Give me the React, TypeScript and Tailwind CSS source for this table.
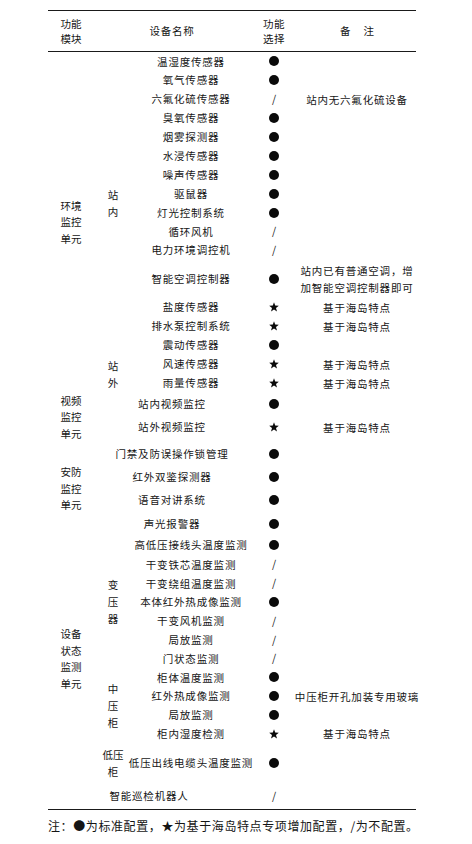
type Mark = 'dot' | 'star' | 'none';
type Row = { name: string; mark: Mark; note?: string[]; h: string };

const SEA = ['基于海岛特点'];

const inner: Row[] = [
  { name: '温湿度传感器', mark: 'dot', h: 'h-[18.9px]' },
  { name: '氧气传感器', mark: 'dot', h: 'h-[18.9px]' },
  { name: '六氟化硫传感器', mark: 'none', note: ['站内无六氟化硫设备'], h: 'h-[18.9px]' },
  { name: '臭氧传感器', mark: 'dot', h: 'h-[18.9px]' },
  { name: '烟雾探测器', mark: 'dot', h: 'h-[18.9px]' },
  { name: '水浸传感器', mark: 'dot', h: 'h-[18.9px]' },
  { name: '噪声传感器', mark: 'dot', h: 'h-[18.9px]' },
  { name: '驱鼠器', mark: 'dot', h: 'h-[18.9px]' },
  { name: '灯光控制系统', mark: 'dot', h: 'h-[18.9px]' },
  { name: '循环风机', mark: 'none', h: 'h-[18.9px]' },
  { name: '电力环境调控机', mark: 'none', h: 'h-[18.9px]' },
  { name: '智能空调控制器', mark: 'dot', note: ['站内已有普通空调，增', '加智能空调控制器即可'], h: 'h-[38px]' },
  { name: '盐度传感器', mark: 'star', note: SEA, h: 'h-[19px]' },
  { name: '排水泵控制系统', mark: 'star', note: SEA, h: 'h-[19px]' },
  { name: '震动传感器', mark: 'dot', h: 'h-[19px]' },
];

const outer: Row[] = [
  { name: '风速传感器', mark: 'star', note: SEA, h: 'h-[19px]' },
  { name: '雨量传感器', mark: 'star', note: SEA, h: 'h-[19px]' },
];

const video: Row[] = [
  { name: '站内视频监控', mark: 'dot', h: 'h-[22px]' },
  { name: '站外视频监控', mark: 'star', note: SEA, h: 'h-[25px]' },
];

const security: Row[] = [
  { name: '门禁及防误操作锁管理', mark: 'dot', h: 'h-[23px]' },
  { name: '红外双鉴探测器', mark: 'dot', h: 'h-[23px]' },
  { name: '语音对讲系统', mark: 'dot', h: 'h-[24px]' },
  { name: '声光报警器', mark: 'dot', h: 'h-[23px]' },
];

const transformer: Row[] = [
  { name: '高低压接线头温度监测', mark: 'dot', h: 'h-[20px]' },
  { name: '干变铁芯温度监测', mark: 'none', h: 'h-[18.8px]' },
  { name: '干变绕组温度监测', mark: 'none', h: 'h-[18.8px]' },
  { name: '本体红外热成像监测', mark: 'dot', h: 'h-[18.8px]' },
  { name: '干变风机监测', mark: 'none', h: 'h-[18.8px]' },
  { name: '局放监测', mark: 'none', h: 'h-[18.8px]' },
  { name: '门状态监测', mark: 'none', h: 'h-[18.8px]' },
];

const mvCabinet: Row[] = [
  { name: '柜体温度监测', mark: 'dot', h: 'h-[18.8px]' },
  { name: '红外热成像监测', mark: 'dot', note: ['中压柜开孔加装专用玻璃'], h: 'h-[18.8px]' },
  { name: '局放监测', mark: 'dot', h: 'h-[18.8px]' },
  { name: '柜内湿度检测', mark: 'star', note: SEA, h: 'h-[18.8px]' },
];

const lvCabinet: Row[] = [
  { name: '低压出线电缆头温度监测', mark: 'dot', h: 'h-[40px]' },
];

function MarkCell({ mark }: { mark: Mark }) {
  return (
    <div className="w-[48px] flex items-center justify-center">
      {mark === 'dot' && <span className="block w-[10px] h-[10px] rounded-full bg-[#0a0a0a]" />}
      {mark === 'star' && (
        <svg width="10" height="10" viewBox="0 0 10 10" className="block">
          <polygon
            points="5,0.3 6.2,3.6 9.8,3.7 7,5.9 8,9.6 5,7.4 2,9.6 3,5.9 0.2,3.7 3.8,3.6"
            fill="#0a0a0a"
          />
        </svg>
      )}
      {mark === 'none' && <span className="text-[10.5px] leading-none">/</span>}
    </div>
  );
}

function TableRow({ row, nameW }: { row: Row; nameW: string }) {
  return (
    <div className={`flex ${row.h}`}>
      <div className={`${nameW} flex items-center justify-center whitespace-nowrap tracking-[0.8px]`}>
        {row.name}
      </div>
      <MarkCell mark={row.mark} />
      <div className="w-[118px] flex flex-col items-center justify-center whitespace-nowrap leading-[17px] tracking-[0.8px]">
        {row.note?.map((line) => (
          <span key={line}>{line}</span>
        ))}
      </div>
    </div>
  );
}

function GroupLabel({ lines }: { lines: string[] }) {
  return (
    <div className="w-[46px] shrink-0 flex flex-col items-center justify-center leading-[16.5px]">
      {lines.map((l) => (
        <span key={l}>{l}</span>
      ))}
    </div>
  );
}

function SubGroup({ lines, rows }: { lines: string[]; rows: Row[] }) {
  return (
    <div className="flex">
      <div className="w-[38px] shrink-0 flex flex-col items-center justify-center leading-[17px]">
        {lines.map((l) => (
          <span key={l}>{l}</span>
        ))}
      </div>
      <div className="flex flex-col">
        {rows.map((r) => (
          <TableRow key={r.name} row={r} nameW="w-[118px]" />
        ))}
      </div>
    </div>
  );
}

export default function App() {
  return (
    <div className="w-[472px] h-[844px] bg-white text-[#151515] text-[10.5px] font-['Noto_Sans_CJK_SC',sans-serif] overflow-hidden">
      <div className="ml-[48px] w-[368px] pt-[10px]">
        {/* 表头 */}
        <div className="flex h-[42px] border-y border-[#1a1a1a]">
          <div className="w-[46px] flex flex-col items-center justify-center leading-[15px]">
            <span>功能</span>
            <span>模块</span>
          </div>
          <div className="w-[156px] flex items-center justify-center tracking-[0.8px]">设备名称</div>
          <div className="w-[48px] flex flex-col items-center justify-center leading-[15px] tracking-[0.5px]">
            <span>功能</span>
            <span>选择</span>
          </div>
          <div className="w-[118px] flex items-center justify-center">
            <span>备</span>
            <span className="ml-[13px]">注</span>
          </div>
        </div>

        {/* 环境监控单元 */}
        <div className="flex">
          <GroupLabel lines={['环境', '监控', '单元']} />
          <div className="flex flex-col">
            <SubGroup lines={['站', '内']} rows={inner} />
            <SubGroup lines={['站', '外']} rows={outer} />
          </div>
        </div>

        {/* 视频监控单元 */}
        <div className="flex">
          <GroupLabel lines={['视频', '监控', '单元']} />
          <div className="flex flex-col">
            {video.map((r) => (
              <TableRow key={r.name} row={r} nameW="w-[156px]" />
            ))}
          </div>
        </div>

        {/* 安防监控单元 */}
        <div className="flex">
          <GroupLabel lines={['安防', '监控', '单元']} />
          <div className="flex flex-col">
            {security.map((r) => (
              <TableRow key={r.name} row={r} nameW="w-[156px]" />
            ))}
          </div>
        </div>

        {/* 设备状态监测单元 */}
        <div className="flex">
          <GroupLabel lines={['设备', '状态', '监测', '单元']} />
          <div className="flex flex-col">
            <SubGroup lines={['变', '压', '器']} rows={transformer} />
            <SubGroup lines={['中', '压', '柜']} rows={mvCabinet} />
            <SubGroup lines={['低压', '柜']} rows={lvCabinet} />
          </div>
        </div>

        <div className="border-b border-[#1a1a1a]">
          <TableRow row={{ name: '智能巡检机器人', mark: 'none', h: 'h-[26px]' }} nameW="w-[202px]" />
        </div>

        <p className="mt-[8px] text-[12px] leading-[16px] whitespace-nowrap tracking-[0.6px]">
          注：●为标准配置，★为基于海岛特点专项增加配置，/为不配置。
        </p>
      </div>
    </div>
  );
}
